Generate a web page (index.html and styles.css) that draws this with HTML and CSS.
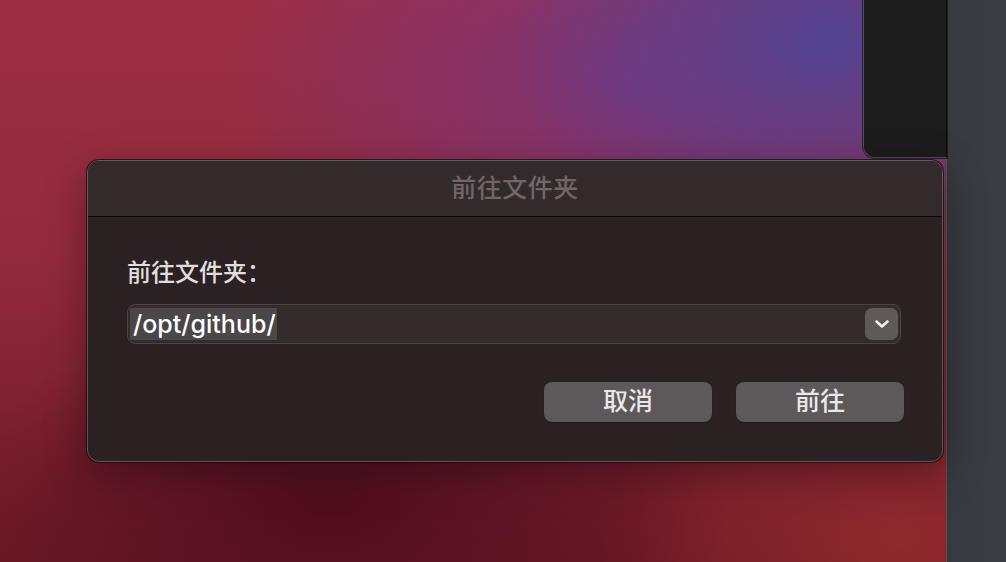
FILE: index.html
```html
<!DOCTYPE html>
<html lang="zh-CN">
<head>
<meta charset="utf-8">
<link rel="stylesheet" href="styles.css">
</head>
<body>
<div class="screen">
  <div class="desktop">
    <div class="bg-window"></div>
    <div class="dialog">
      <div class="titlebar">前往文件夹</div>
      <div class="content">
        <div class="label">前往文件夹：</div>
        <div class="combo">
          <span class="value"><span class="sel">/opt/github/</span></span>
          <span class="drop">
            <svg width="16" height="10" viewBox="0 0 16 10"><path d="M2.5 2.5 L8 7.5 L13.5 2.5" fill="none" stroke="#f2eeee" stroke-width="2.6" stroke-linecap="round" stroke-linejoin="round"/></svg>
          </span>
        </div>
        <div class="actions">
          <button class="btn">取消</button>
          <button class="btn">前往</button>
        </div>
      </div>
    </div>
  </div>
  <div class="side"></div>
</div>
</body>
</html>
```

FILE: styles.css
```css
* { box-sizing: border-box; }
html, body { margin: 0; padding: 0; width: 1006px; height: 562px; overflow: hidden; }
body { font-family: "Noto Sans CJK SC", "Noto Sans", sans-serif; }

.screen { display: flex; width: 1006px; height: 562px; }

.desktop {
  position: relative;
  width: 946px;
  height: 562px;
  background:
    radial-gradient(ellipse 320px 220px at 830px 40px, rgba(80,70,150,0.95), rgba(80,70,150,0) 100%),
    radial-gradient(ellipse 420px 260px at 640px 80px, rgba(120,55,130,0.85), rgba(120,55,130,0) 100%),
    radial-gradient(ellipse 400px 190px at 330px 510px, rgba(70,10,25,0.8), rgba(70,10,25,0) 100%),
    radial-gradient(ellipse 300px 200px at 900px 540px, rgba(150,45,45,0.8), rgba(150,45,45,0) 100%),
    linear-gradient(180deg, #9d2f45 0%, #922a3d 45%, #6e1a28 100%);
}

.side {
  width: 60px;
  height: 562px;
  background: linear-gradient(90deg, #363a3f, #3a3e43);
  border-left: 1px solid #50555a;
}

.bg-window {
  position: absolute;
  left: 863px;
  top: -20px;
  width: 84px;
  height: 178px;
  background: #1c1c1c;
  border: 1px solid #4d4d4d;
  border-right: 1px solid #0d0d0d;
  border-radius: 0 0 0 12px;
  box-shadow: 0 0 0 1px rgba(0,0,0,0.5);
}

.dialog {
  position: absolute;
  left: 87px;
  top: 160px;
  width: 856px;
  height: 302px;
  background: #292122;
  border: 1px solid #5e5a5b;
  border-radius: 12px;
  box-shadow: 0 0 0 1px rgba(0,0,0,0.6), 0 12px 40px rgba(0,0,0,0.35);
  display: flex;
  flex-direction: column;
  overflow: hidden;
}

.titlebar {
  height: 56px;
  flex: none;
  background: #322a2b;
  border-bottom: 1px solid #0a0808;
  color: #6f6768;
  font-size: 25px;
  font-weight: 500;
  display: flex;
  align-items: center;
  justify-content: center;
  padding-bottom: 5px;
  letter-spacing: 0.5px;
}

.content {
  display: flex;
  flex-direction: column;
  padding: 39px 38px 0 39px;
}

.label {
  color: #e2dede;
  font-size: 24px;
  font-weight: 500;
  line-height: 30px;
  height: 30px;
}

.combo {
  margin-top: 18px;
  height: 40px;
  width: 774px;
  border: 1px solid #4a4344;
  border-radius: 8px;
  background: #332b2c;
  display: flex;
  align-items: center;
  justify-content: space-between;
  padding: 0 2px 0 2px;
}

.value {
  font-family: Inter, "Noto Sans", sans-serif;
  font-size: 25px;
  font-weight: 500;
  color: #ffffff;
}
.sel {
  display: inline-block;
  background: #4b4647;
  padding: 0 1px 0 3px;
  line-height: 32px;
  height: 32px;
}

.drop {
  width: 33px;
  height: 32px;
  border-radius: 7px;
  background: #5f595a;
  display: flex;
  align-items: center;
  justify-content: center;
}

.actions {
  margin-top: 38px;
  display: flex;
  justify-content: flex-end;
  gap: 24px;
  width: 777px;
}

.btn {
  width: 168px;
  height: 40px;
  border: none;
  border-radius: 8px;
  background: #5d5859;
  color: #ebe7e7;
  font-family: "Noto Sans CJK SC", sans-serif;
  font-size: 25px;
  font-weight: 500;
  line-height: 34px;
  padding: 0 0 6px 0;
  box-shadow: 0 1px 1px rgba(0,0,0,0.3);
}
```
